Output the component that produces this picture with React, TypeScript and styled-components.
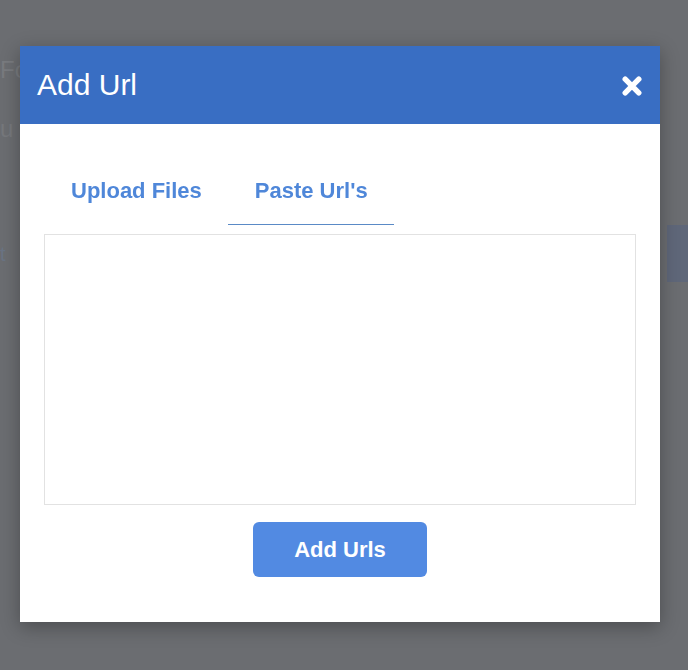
import React, { useState } from "react";
import styled, { createGlobalStyle } from "styled-components";

const GlobalStyle = createGlobalStyle`
  html, body {
    margin: 0;
    padding: 0;
    background: #6b6d71;
    font-family: "Liberation Sans", Arial, Helvetica, sans-serif;
  }
  * { box-sizing: border-box; }
`;

const BackPage = styled.div`
  position: relative;
  height: 670px;
  overflow: hidden;
  display: flex;
  flex-direction: column;
  padding-top: 58px;
`;

const BackText = styled.div<{ $size: number; $color: string; $gap: number }>`
  font-size: ${(p) => p.$size}px;
  line-height: 1;
  color: ${(p) => p.$color};
  margin-top: ${(p) => p.$gap}px;
`;

const BackRow = styled.div`
  display: flex;
  justify-content: space-between;
  align-items: center;
  margin-top: 84px;
  height: 57px;
`;

const BackButton = styled.div`
  width: 21px;
  height: 57px;
  background: #5f6779;
`;

const Overlay = styled.div`
  position: fixed;
  inset: 0;
  display: flex;
  align-items: flex-start;
  padding: 46px 0 0 20px;
`;

const Modal = styled.div`
  width: 640px;
  background: #ffffff;
  box-shadow: 0 5px 18px rgba(0, 0, 0, 0.3);
`;

const Header = styled.div`
  height: 78px;
  background: #396ec3;
  display: flex;
  align-items: center;
  justify-content: space-between;
  padding: 0 17px 0 17px;
`;

const Title = styled.h2`
  margin: 0;
  color: #ffffff;
  font-size: 30px;
  font-weight: 400;
  line-height: 1;
`;

const CloseButton = styled.button`
  border: 0;
  background: transparent;
  padding: 0;
  width: 22px;
  height: 22px;
  display: flex;
  align-items: center;
  justify-content: center;
  cursor: pointer;
  margin-top: 2px;
`;

const Body = styled.div`
  padding: 32px 24px 45px;
  display: flex;
  flex-direction: column;
`;

const Tabs = styled.div`
  display: flex;
`;

const Tab = styled.button<{ $active?: boolean }>`
  border: 0;
  background: transparent;
  padding: 23px 26px 21px 27px;
  font-family: inherit;
  font-size: 22px;
  font-weight: 700;
  line-height: 24px;
  color: #4f87d9;
  border-bottom: 1px solid ${(p) => (p.$active ? "#5a8ac6" : "transparent")};
  cursor: pointer;
`;

const UrlArea = styled.textarea`
  margin-top: 9px;
  width: 100%;
  height: 271px;
  border: 1px solid #e2e2e2;
  resize: none;
  outline: none;
  font-family: inherit;
  font-size: 16px;
  padding: 8px;
`;

const Actions = styled.div`
  display: flex;
  justify-content: center;
  margin-top: 17px;
`;

const PrimaryButton = styled.button`
  width: 174px;
  height: 55px;
  border: 0;
  border-radius: 6px;
  background: #528ae2;
  color: #ffffff;
  font-family: inherit;
  font-size: 22px;
  font-weight: 700;
  cursor: pointer;
`;

const CloseIcon = () => (
  <svg width="20" height="20" viewBox="0 0 20 20">
    <path
      d="M3.2 3.2 L16.8 16.8 M16.8 3.2 L3.2 16.8"
      stroke="#ffffff"
      strokeWidth="5.4"
      strokeLinecap="round"
      fill="none"
    />
  </svg>
);

export default function App() {
  const [tab, setTab] = useState<"upload" | "paste">("paste");
  return (
    <>
      <GlobalStyle />
      <BackPage>
        <BackText $size={24} $color="#797b7f" $gap={0}>Fo</BackText>
        <BackText $size={24} $color="#76787c" $gap={35}>u</BackText>
        <BackRow>
          <BackText $size={20} $color="#6a7484" $gap={0}>t</BackText>
          <BackButton />
        </BackRow>
      </BackPage>
      <Overlay>
        <Modal>
          <Header>
            <Title>Add Url</Title>
            <CloseButton aria-label="Close">
              <CloseIcon />
            </CloseButton>
          </Header>
          <Body>
            <Tabs>
              <Tab $active={tab === "upload"} onClick={() => setTab("upload")}>
                Upload Files
              </Tab>
              <Tab $active={tab === "paste"} onClick={() => setTab("paste")}>
                Paste Url's
              </Tab>
            </Tabs>
            <UrlArea />
            <Actions>
              <PrimaryButton>Add Urls</PrimaryButton>
            </Actions>
          </Body>
        </Modal>
      </Overlay>
    </>
  );
}
